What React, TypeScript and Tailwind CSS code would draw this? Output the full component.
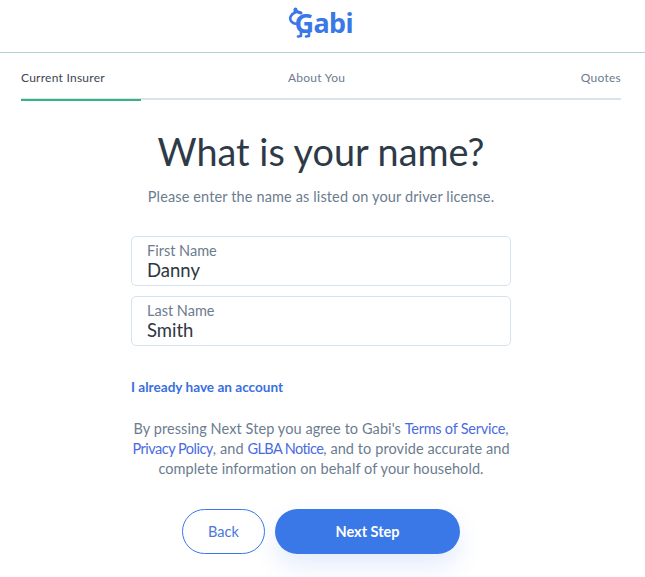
const body = { fontFamily: 'Lato, sans-serif' };
const noto = { fontFamily: '"Noto Sans", sans-serif' };

function Logo() {
  return (
    <div className="relative h-[52px] w-[66px]">
      <svg viewBox="0 0 66 52" className="absolute inset-0 h-full w-full" fill="none" stroke="#3b78e7" strokeWidth="2.6" strokeLinecap="round" strokeLinejoin="round">
        <path d="M8 12 C3 14 1 18 3 21 C5 24 8 24 10 24" />
        <path d="M7 11 L13 13" strokeWidth="3" />
        <circle cx="7.5" cy="9.5" r="2" fill="#3b78e7" stroke="none" />
        <path d="M13 32 L13 36 L10 36.5" />
        <path d="M21 32 L21 36 L18 36.5" />
      </svg>
      <div className="absolute left-[6.5px] top-[5px] text-[27px] leading-[36px] font-bold tracking-[-0.6px] text-[#3b78e7]" style={noto}>Gabi</div>
    </div>
  );
}

function Field({ label, value }: { label: string; value: string }) {
  return (
    <div className="flex h-[50px] w-[380px] flex-col rounded-[5px] border border-[#d5e2f0] px-[15px] pt-[5px]">
      <span className="text-[14.5px] leading-[18px] text-[#6b7c8f]" style={body}>{label}</span>
      <span className="text-[18.5px] leading-[20px] text-[#2e3742]" style={body}>{value}</span>
    </div>
  );
}

export default function App() {
  return (
    <div className="h-[577px] w-[645px] overflow-hidden bg-white">
      <header className="flex h-[53px] justify-center border-b border-[#b8cfe0] pr-[3px]">
        <Logo />
      </header>

      <div className="w-[642px]">
        <nav className="mx-[21px] h-[47px] border-b-2 border-[#d8e3ef]">
          <div className="flex justify-between pt-[17px] text-[12px] leading-[16px] tracking-[0.25px] text-[#6b7c8f]" style={body}>
            <span className="w-[267px] text-[#3c4654]">Current Insurer</span>
            <span>About You</span>
            <span className="ml-auto">Quotes</span>
          </div>
          <div className="relative top-[13px] h-[2px] w-[120px] bg-[#36b37e]" />
        </nav>

        <main className="flex flex-col items-center">
          <h1 className="mt-[25px] text-[37.8px] leading-[54px] text-[#2e3a47]" style={body}>What is your name?</h1>
          <p className="mt-[8px] text-[14.5px] leading-[20px] tracking-[0.13px] text-[#6b7c8f]" style={body}>Please enter the name as listed on your driver license.</p>

          <div className="mt-[29px] flex flex-col gap-[10px]">
            <Field label="First Name" value="Danny" />
            <Field label="Last Name" value="Smith" />
          </div>

          <a className="mt-[32px] w-[380px] text-[13.6px] leading-[18px] font-bold text-[#3b6fe0]" style={body}>I already have an account</a>

          <p className="mt-[23px] w-[400px] text-center text-[14.5px] leading-[20px] tracking-[0.08px] text-[#6b7c8f]" style={body}>
            By pressing Next Step you agree to Gabi's <span className="tracking-[-0.25px] text-[#4a6be0]">Terms of Service</span>, <span className="tracking-[-0.5px] text-[#4a6be0]">Privacy Policy</span>, and <span className="tracking-[-0.6px] text-[#4a6be0]">GLBA Notice</span>, and to provide accurate and complete information on behalf of your household.
          </p>

          <div className="mt-[30px] flex gap-[10px]">
            <button className="h-[45px] w-[83px] rounded-full border border-[#3b78e7] text-[14.5px] text-[#4a78d8]" style={body}>Back</button>
            <button className="h-[45px] w-[185px] rounded-full bg-[#3b78e7] text-[14.5px] font-bold text-white shadow-[0_12px_24px_rgba(59,120,231,0.14)]" style={body}>Next Step</button>
          </div>
        </main>
      </div>
    </div>
  );
}
